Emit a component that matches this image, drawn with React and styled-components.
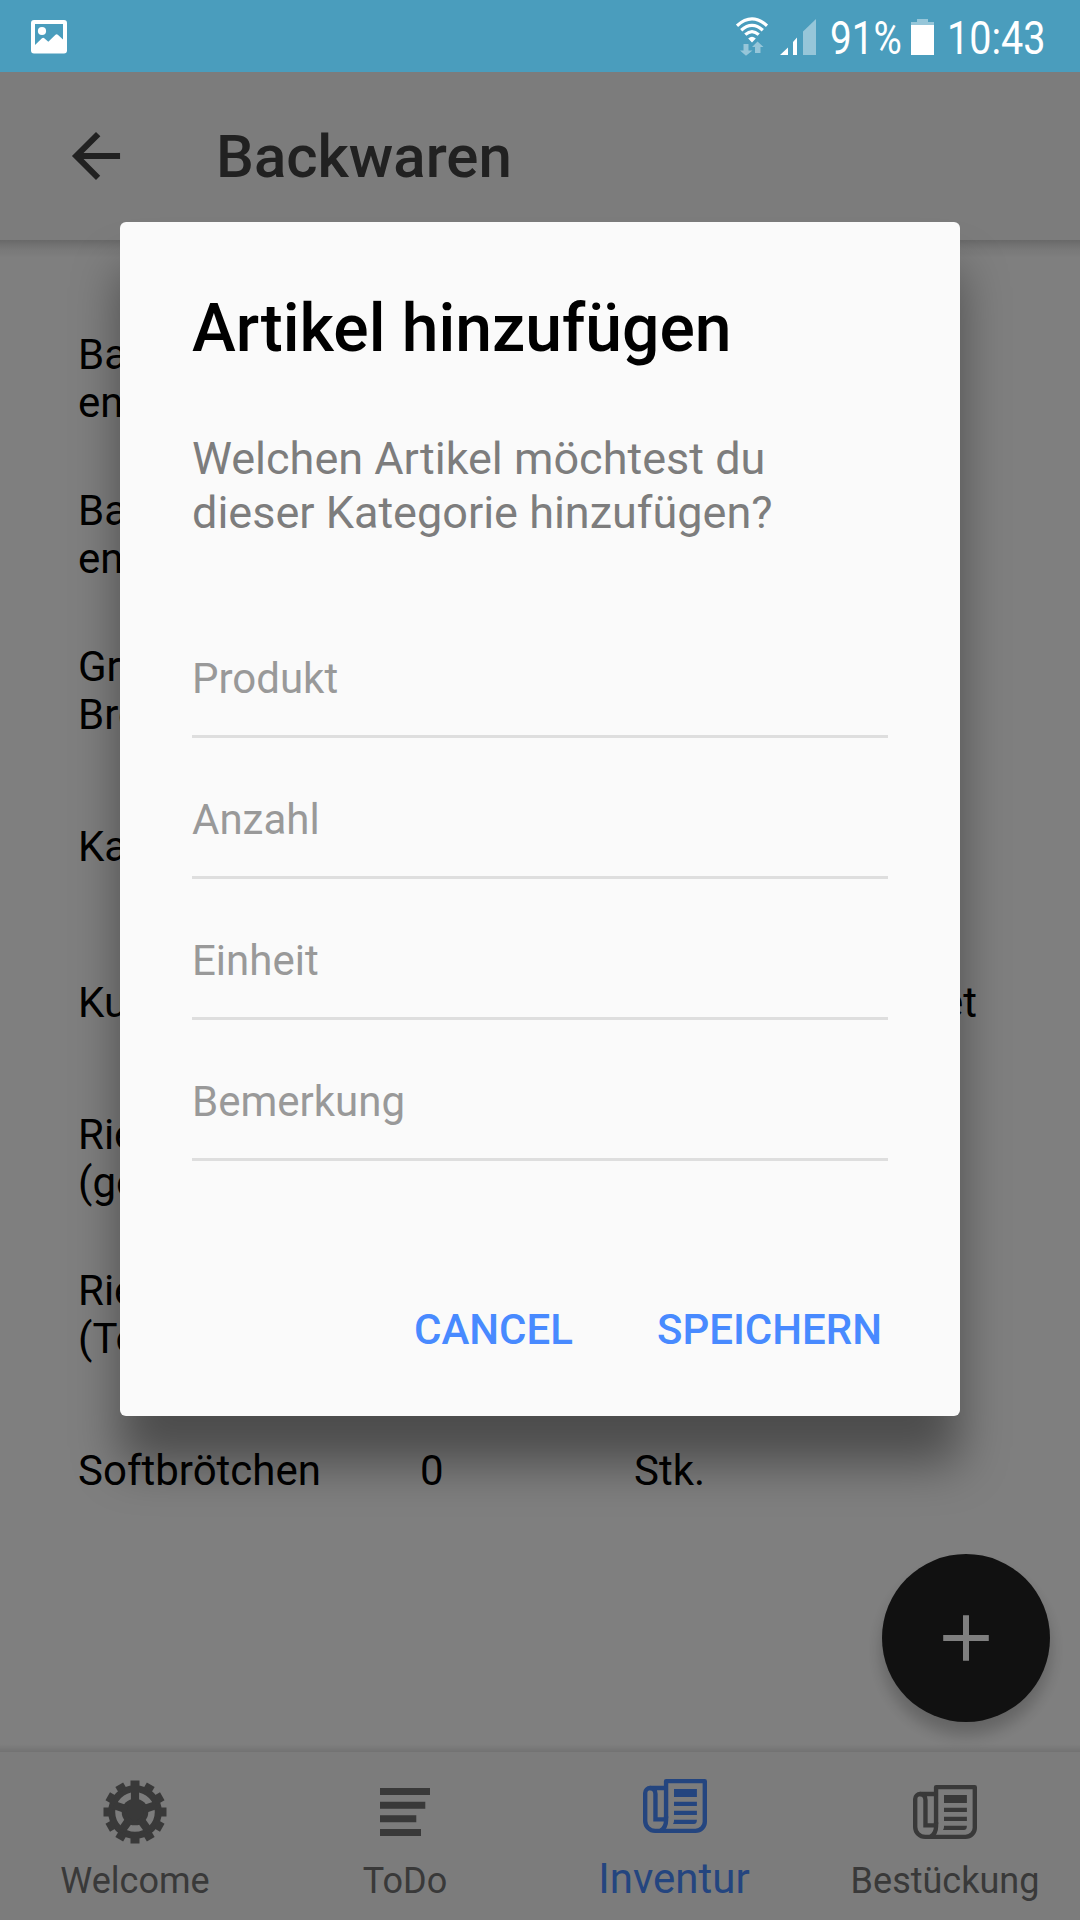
import React from "react";
import styled, { createGlobalStyle } from "styled-components";

const GlobalStyle = createGlobalStyle`
  * { box-sizing: border-box; }
  html, body { margin: 0; padding: 0; }
  body { font-family: Roboto, "Noto Sans", sans-serif; background: #808080; }
`;

const Screen = styled.div`
  position: relative;
  display: flex;
  flex-direction: column;
  width: 1080px;
  height: 1920px;
  overflow: hidden;
  background: #fff;
`;

const StatusBar = styled.header`
  display: flex;
  justify-content: space-between;
  flex: none;
  height: 72px;
  padding: 0 34px 0 31px;
  background: #4a9dbd;
  color: #fff;
`;

const StatusGroup = styled.div`
  display: flex;
  align-items: flex-start;
`;

const StatusIcon = styled.svg`
  display: block;
  flex: none;
  margin: ${(p) => p.$top}px ${(p) => p.$gap || 0}px 0 0;
`;

const StatusText = styled.span`
  flex: none;
  width: ${(p) => p.$width}px;
  margin-right: ${(p) => p.$gap || 0}px;
  font-size: 46px;
  line-height: 54px;
  padding-top: 11px;
  white-space: nowrap;
  transform: scaleX(${(p) => p.$squeeze});
  transform-origin: left center;
`;

const Toolbar = styled.div`
  display: flex;
  align-items: center;
  flex: none;
  height: 168px;
  padding-left: 60px;
  background: #f8f8f8;
`;

const BackButton = styled.button`
  display: flex;
  width: 72px;
  height: 72px;
  margin: 0 84px 0 0;
  padding: 0;
  border: 0;
  background: none;
  color: #424242;
`;

const PageTitle = styled.h1`
  margin: 0;
  padding-top: 2px;
  font-size: 60px;
  line-height: 72px;
  font-weight: 500;
  color: #424242;
`;

const Content = styled.main`
  display: flex;
  flex-direction: column;
  flex: 1;
  background: linear-gradient(#d2d2d2 0, #e4e4e4 5px, #f3f3f3 10px, #f7f7f7 14px, #fff 18px);
`;

const Articles = styled.div`
  display: flex;
  flex-direction: column;
  padding: 61px 78px 0;
`;

const Article = styled.div`
  display: grid;
  grid-template-columns: 342px 214px 1fr auto;
  align-items: center;
  height: 156px;
  padding-right: 25px;
  font-size: 42px;
  line-height: 48px;
  color: #000;
  white-space: pre-line;
`;

const TabShade = styled.div`
  margin-top: auto;
  height: 8px;
  background: linear-gradient(rgba(0, 0, 0, 0), rgba(0, 0, 0, 0.1));
`;

const AddButton = styled.button`
  position: absolute;
  right: 30px;
  bottom: 198px;
  display: flex;
  align-items: center;
  justify-content: center;
  width: 168px;
  height: 168px;
  padding: 0;
  border: 0;
  border-radius: 50%;
  background: #222;
  color: #fff;
  box-shadow: 0 12px 18px rgba(0, 0, 0, 0.14), 0 12px 15px rgba(0, 0, 0, 0.1);
`;

const TabBar = styled.nav`
  display: grid;
  grid-template-columns: repeat(4, 1fr);
  flex: none;
  height: 168px;
  background: #f8f8f8;
`;

const Tab = styled.a`
  display: flex;
  flex-direction: column;
  align-items: center;
  justify-content: space-between;
  padding: ${(p) => (p.$active ? 21 : 27)}px 0 ${(p) => (p.$active ? 17 : 16)}px;
  color: ${(p) => (p.$active ? "#488aff" : "#727272")};
  font-size: ${(p) => (p.$active ? 42 : 36)}px;
  line-height: ${(p) => (p.$active ? 48 : 45)}px;
`;

const TabGlyph = styled.span`
  display: flex;
  align-items: ${(p) => p.$align || "center"};
  height: 66px;
`;

const TabLabel = styled.span`
  padding-right: ${(p) => (p.$active ? 2 : 0)}px;
`;

const Backdrop = styled.div`
  position: absolute;
  inset: 72px 0 0;
  display: flex;
  align-items: flex-start;
  justify-content: center;
  padding-top: 150px;
  background: rgba(0, 0, 0, 0.5);
`;

const Dialog = styled.section`
  display: flex;
  flex-direction: column;
  width: 840px;
  height: 1194px;
  padding: 68px 72px 32px;
  border-radius: 6px;
  background: #fafafa;
  box-shadow: 0 48px 48px rgba(0, 0, 0, 0.4);
`;

const DialogTitle = styled.h2`
  margin: 0 0 64px;
  font-size: 66px;
  line-height: 78px;
  font-weight: 500;
  color: #000;
`;

const Message = styled.p`
  margin: 0 0 57px;
  font-size: 45px;
  line-height: 54px;
  color: #7d7d7d;
`;

const Field = styled.input`
  display: block;
  width: 100%;
  height: 141px;
  padding: 57px 0 33px;
  border: 0;
  border-bottom: 3px solid #dedede;
  border-radius: 0;
  outline: none;
  background: transparent;
  font: 400 42px/48px Roboto, "Noto Sans", sans-serif;

  &::placeholder { color: #999; opacity: 1; }
`;

const Actions = styled.div`
  display: flex;
  justify-content: flex-end;
  gap: 24px;
  margin: auto -24px 0 0;
`;

const Action = styled.button`
  height: 108px;
  padding: 0 30px;
  border: 0;
  background: none;
  color: #488aff;
  font: 500 42px/48px Roboto, "Noto Sans", sans-serif;
  text-transform: uppercase;
`;

const articles = [
  { name: "Bagel\nentk." },
  { name: "Bagel\nentr." },
  { name: "Grau-\nBrot" },
  { name: "Kamut" },
  { name: "Kuchen", note: "Paket" },
  { name: "Riegel\n(gem.)" },
  { name: "Riegel\n(Toff.)" },
  { name: "Softbrötchen", count: "0", unit: "Stk." },
];

const fields = ["Produkt", "Anzahl", "Einheit", "Bemerkung"];

const PictureIcon = () => (
  <StatusIcon $top={20} width="36" height="34" viewBox="0 0 36 34">
    <path
      fill="#fff"
      fillRule="evenodd"
      d="M3 0h30a3 3 0 0 1 3 3v27.500a3 3 0 0 1-3 3H3a3 3 0 0 1-3-3V3a3 3 0 0 1 3-3zM4 4v21l7-6.800q1.200-.8 2.300 0l4 3.500 7.200-7q1.200-.9 2.300 0L32 19.500V4z"
    />
    <circle cx="11" cy="11" r="4.100" fill="#fff" />
  </StatusIcon>
);

const WifiIcon = () => (
  <StatusIcon $top={17} $gap={11} width="34" height="40" viewBox="0 0 34 40">
    <g fill="none" stroke="#fff" strokeWidth="3.200">
      <path d="M2 8.700q15-13.600 30 0" />
      <path d="M6.200 13.300q10.800-9.800 21.600 0" />
      <path d="M10.300 17.700q6.700-6.200 13.400 0" />
    </g>
    <path fill="#fff" d="M13.200 21.600q3.800-3.600 7.600 0L17 25.600z" />
    <path
      fill="#fff"
      fillOpacity=".42"
      d="M8.500 27H13.500v6.500h4L11 38.800 5 33.500h3.500zM20 36h5.500v-6h3L22.500 24.500 17 30h3z"
    />
  </StatusIcon>
);

const SignalIcon = () => (
  <StatusIcon $top={19} $gap={14} width="36" height="36" viewBox="0 0 36 36">
    <path fill="#fff" d="M0 36l8-7.500V36zM13 36V23l4-4.500V36z" />
    <path fill="#fff" fillOpacity=".42" d="M23 36V12.500L36 0v36z" />
  </StatusIcon>
);

const BatteryIcon = () => (
  <StatusIcon $top={19} $gap={13} width="23" height="36" viewBox="0 0 23 36">
    <path fill="#fff" fillOpacity=".42" d="M6 0h11v3h6v3H0V3h6z" />
    <path fill="#fff" d="M0 6h23v30H0z" />
  </StatusIcon>
);

const BackIcon = () => (
  <svg width="72" height="72" viewBox="0 0 512 512" fill="currentColor">
    <path d="M427 234.625H167.296l119.702-119.702L256 85 85 256l171 171 29.922-29.922-118.626-119.701H427v-42.752z" />
  </svg>
);

const PlusIcon = () => (
  <svg width="72" height="72" viewBox="0 0 512 512" fill="currentColor">
    <path d="M418 277.300H277.300V418h-42.600V277.300H94v-42.600h140.700V94h42.600v140.700H418z" />
  </svg>
);

const GearIcon = () => (
  <svg width="64" height="64" viewBox="-32 -32 64 64" fill="currentColor">
    <circle r="23.300" fill="none" stroke="currentColor" strokeWidth="7" />
    <circle r="13.300" />
    {Array.from({ length: 12 }, (_, i) => (
      <rect key={i} x="-4.500" y="-31.500" width="9" height="7" transform={`rotate(${i * 30})`} />
    ))}
    {Array.from({ length: 5 }, (_, i) => (
      <rect key={i} x="-4.100" y="-22" width="8.200" height="14" transform={`rotate(${i * 72})`} />
    ))}
  </svg>
);

const ListIcon = () => (
  <svg width="50" height="57" viewBox="0 0 50 57" fill="currentColor">
    <path d="M0 9h50v7H0zM0 22.800h45.300v7H0zM0 36.200h36.300v7H0zM0 50h41v7H0z" />
  </svg>
);

const PaperIcon = () => (
  <svg width="64" height="54" viewBox="0 0 190 162" preserveAspectRatio="none">
    <g fill="none" stroke="currentColor" strokeWidth="13">
      <path
        d="M68.500 118V6.500h115V128a27.500 27.500 0 0 1-27.500 27.500H36A29.500 29.500 0 0 1 6.500 126V42a15 15 0 0 1 15-15H68"
        strokeLinejoin="round"
      />
      <path d="M68.500 112v12q0 22-16 31" />
      <path d="M20 27q17 0 17 18v76h30" />
    </g>
    <path
      fill="currentColor"
      d="M92 30h68v24H92zM92 68h68v13H92zM92 95h68v13H92zM92 122h68q0 13-9 13H89q3-4 3-9z"
    />
  </svg>
);

const tabs = [
  { label: "Welcome", Icon: GearIcon },
  { label: "ToDo", Icon: ListIcon, align: "flex-start" },
  { label: "Inventur", Icon: PaperIcon, active: true },
  { label: "Bestückung", Icon: PaperIcon },
];

export default function App() {
  return (
    <>
      <GlobalStyle />
      <Screen>
        <StatusBar>
          <StatusGroup>
            <PictureIcon />
          </StatusGroup>
          <StatusGroup>
            <WifiIcon />
            <SignalIcon />
            <StatusText $width={71} $gap={10} $squeeze={0.84}>91%</StatusText>
            <BatteryIcon />
            <StatusText $width={99} $squeeze={0.86}>10:43</StatusText>
          </StatusGroup>
        </StatusBar>
        <Toolbar>
          <BackButton aria-label="Zurück">
            <BackIcon />
          </BackButton>
          <PageTitle>Backwaren</PageTitle>
        </Toolbar>
        <Content>
          <Articles>
            {articles.map((a, i) => (
              <Article key={i}>
                <span>{a.name}</span>
                <span>{a.count}</span>
                <span>{a.unit}</span>
                <span>{a.note}</span>
              </Article>
            ))}
          </Articles>
          <TabShade />
        </Content>
        <TabBar>
          {tabs.map(({ label, Icon, active, align }) => (
            <Tab key={label} $active={active}>
              <TabGlyph $align={align}>
                <Icon />
              </TabGlyph>
              <TabLabel $active={active}>{label}</TabLabel>
            </Tab>
          ))}
        </TabBar>
        <AddButton aria-label="Artikel hinzufügen">
          <PlusIcon />
        </AddButton>
        <Backdrop>
          <Dialog role="dialog">
            <DialogTitle>Artikel hinzufügen</DialogTitle>
            <Message>Welchen Artikel möchtest du dieser Kategorie hinzufügen?</Message>
            {fields.map((f) => (
              <Field key={f} placeholder={f} />
            ))}
            <Actions>
              <Action>Cancel</Action>
              <Action>Speichern</Action>
            </Actions>
          </Dialog>
        </Backdrop>
      </Screen>
    </>
  );
}
